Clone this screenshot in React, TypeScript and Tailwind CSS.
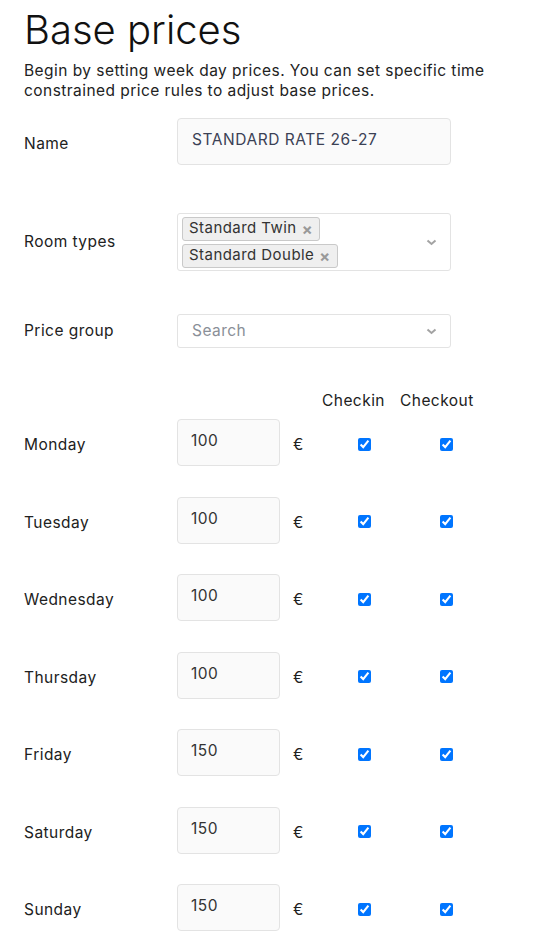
import { Fragment } from 'react';

const days = [
  { name: 'Monday', price: 100 },
  { name: 'Tuesday', price: 100 },
  { name: 'Wednesday', price: 100 },
  { name: 'Thursday', price: 100 },
  { name: 'Friday', price: 150 },
  { name: 'Saturday', price: 150 },
  { name: 'Sunday', price: 150 },
];

function Chevron(): JSX.Element {
  return (
    <svg width="11" height="7" viewBox="0 0 11 7" className="text-[#a3a3a3]">
      <path d="M1.5 1.5 L5.5 5 L9.5 1.5" fill="none" stroke="currentColor" strokeWidth="2" />
    </svg>
  );
}

function Tag({ label }: { label: string }): JSX.Element {
  return (
    <span className="inline-flex h-[24px] items-center gap-[5px] rounded-[3px] border border-[#c9c9c9] bg-[#efefef] px-[6px] text-[15px] text-[#333]">
      {label}
      <span className="text-[16px] font-bold leading-none text-[#999]">×</span>
    </span>
  );
}

export default function App(): JSX.Element {
  return (
    <div className="min-h-screen bg-white px-6 pt-[6px] font-['Inter','Open_Sans',sans-serif] tracking-[0.45px] text-[#212121]">
      <h1 className="text-[40px] font-light leading-[48px] tracking-normal text-[#111]">Base prices</h1>
      <p className="mt-[7px] text-[15.5px] leading-[20px] text-[#222]">
        Begin by setting week day prices. You can set specific time
        <br />
        constrained price rules to adjust base prices.
      </p>

      <div className="mt-[17px] grid grid-cols-[153px_274px] items-center text-[15.5px]">
        {/* Name */}
        <span className="pt-1">Name</span>
        <div className="flex h-[47px] items-center rounded-[4px] border border-[#e3e3e3] bg-[#fafafa] px-[14px] pb-[3px] tracking-[0.55px] text-[#3b4155]">
          STANDARD RATE 26-27
        </div>

        {/* Room types */}
        <span className="mt-[48px]">Room types</span>
        <div className="mt-[48px] flex h-[58px] items-center rounded-[3px] border border-[#e3e3e3] bg-white pl-[4px] pr-[13px]">
          <div className="flex flex-1 flex-col items-start gap-[3px]">
            <Tag label="Standard Twin" />
            <Tag label="Standard Double" />
          </div>
          <Chevron />
        </div>

        {/* Price group */}
        <span className="mt-[43px]">Price group</span>
        <div className="mt-[43px] flex h-[34px] items-center rounded-[3px] border border-[#e3e3e3] bg-white pl-[14px] pr-[13px]">
          <span className="flex-1 text-[#8a8f98]">Search</span>
          <Chevron />
        </div>
      </div>

      {/* Week day prices */}
      <div className="mt-[43px] flex text-[15.5px] leading-[20px]">
        <span className="w-[292px]" />
        <span className="w-[82px] pl-[6px]">Checkin</span>
        <span className="w-[82px] pl-[2px]">Checkout</span>
      </div>

      <div className="mt-[8px] grid grid-cols-[153px_103px_36px_82px_82px] items-center gap-y-[30.5px] text-[15.5px]">
        {days.map((day) => (
          <Fragment key={day.name}>
            <span className="pt-[5px]">{day.name}</span>
            <div className="flex h-[47px] items-center rounded-[4px] border border-[#e3e3e3] bg-[#fafafa] px-[13px] pb-[3px] text-[#333]">
              {day.price}
            </div>
            <span className="pl-[13px] pt-[5px]">€</span>
            <div className="flex pl-[42px] pt-[3px]">
              <input type="checkbox" defaultChecked className="h-[13px] w-[13px]" />
            </div>
            <div className="flex pl-[42px] pt-[3px]">
              <input type="checkbox" defaultChecked className="h-[13px] w-[13px]" />
            </div>
          </Fragment>
        ))}
      </div>
    </div>
  );
}
